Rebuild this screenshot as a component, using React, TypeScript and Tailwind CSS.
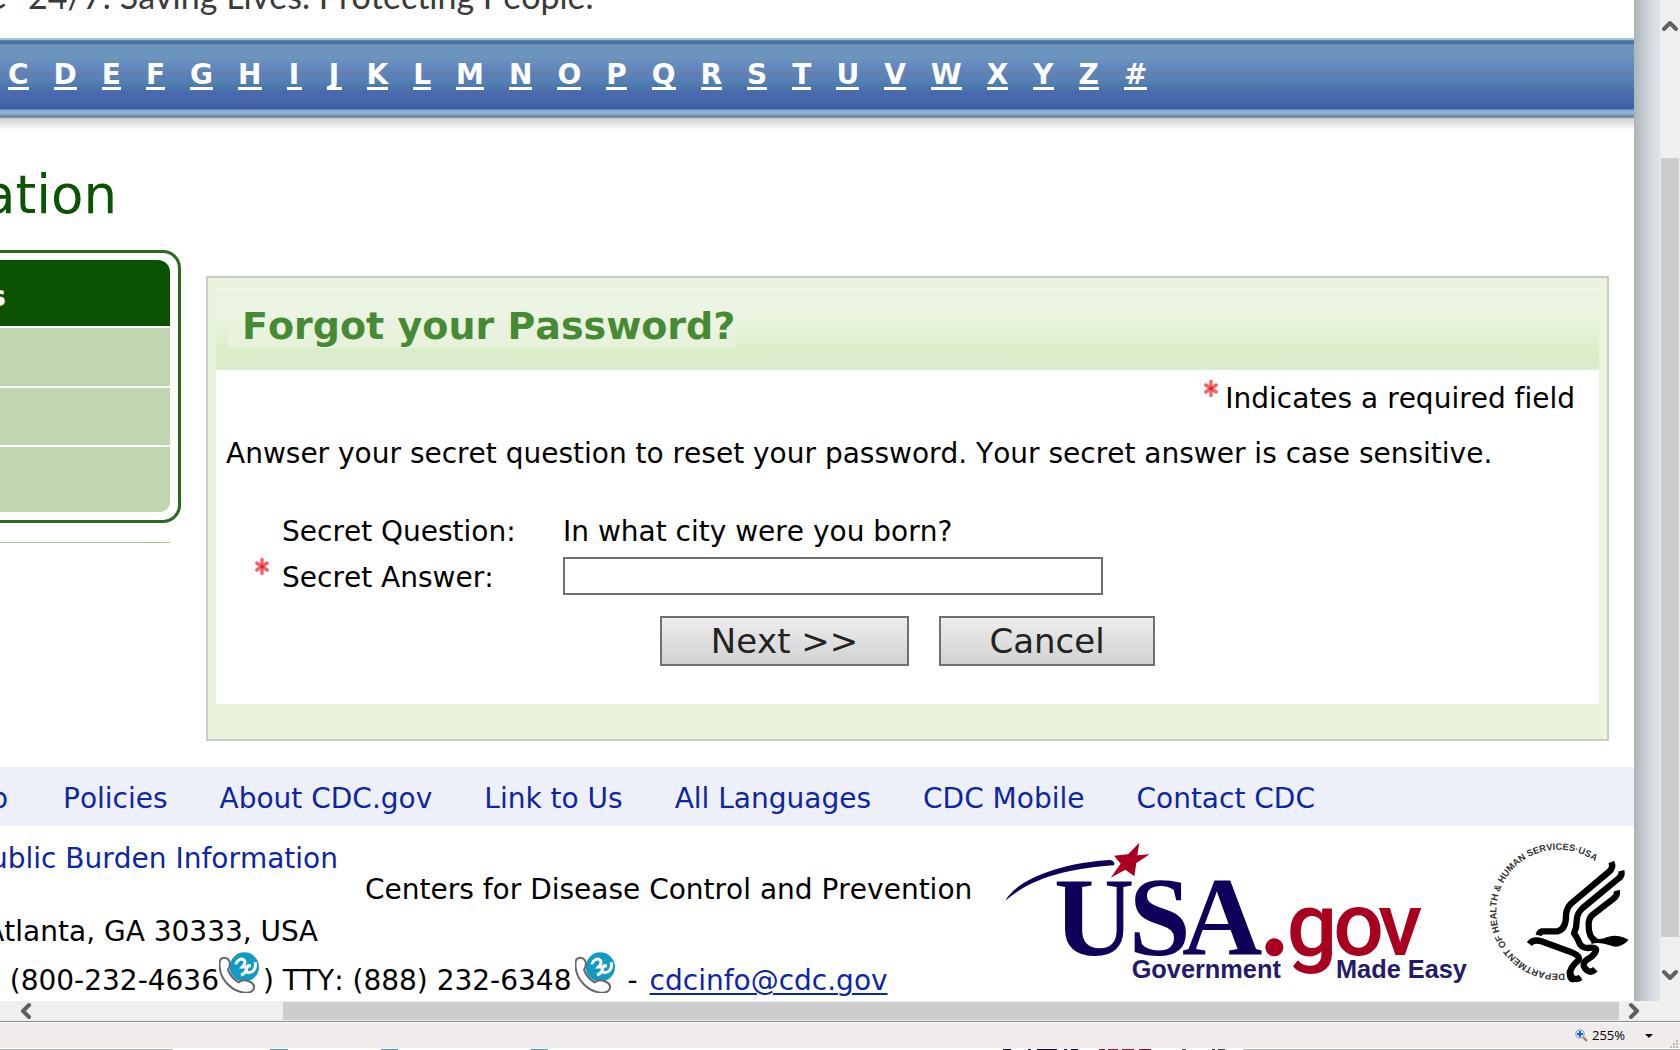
import { ChevronDown, ChevronLeft, ChevronRight, ChevronUp } from 'lucide-react'

const LETTERS = 'CDEFGHIJKLMNOPQRSTUVWXYZ#'.split('')
const FOOTER_LINKS = ['Policies', 'About CDC.gov', 'Link to Us', 'All Languages', 'CDC Mobile', 'Contact CDC']

const Required = () => (
  <svg className="w-4 h-5 shrink-0" viewBox="0 0 16 20" role="img" aria-label="Required">
    <g stroke="#f4484c" strokeWidth="3.4" strokeLinecap="round" opacity="0.85">
      <path d="M8 2.5v14M2.8 6l10.4 7M13.2 6l-10.4 7" />
    </g>
    <circle cx="8" cy="9.5" r="2" fill="#e8222a" />
  </svg>
)

const CallIcon = () => (
  <svg className="w-10 h-[41px] shrink-0" viewBox="660 575 120 123" aria-hidden="true">
    <circle cx="736" cy="620" r="44" fill="#119bc4" />
    <path
      d="M663 600c6-10 20-10 27 0 5 10 2 20-3 28 6 18 18 30 32 38 8-7 18-8 28-4 12 4 20 12 18 22-3 10-14 14-28 13-40-4-72-40-75-76-1-8-1-14 1-21z"
      fill="#fff" stroke="#666" strokeWidth="6"
    />
    <path d="M710 612c4-14 18-20 26-12 6 8 0 14-6 20h14M726 644c6-2 12-6 14-12M744 616h12M768 606c6 18-8 34-22 30-8-4-4-14 4-20" fill="none" stroke="#fff" strokeWidth="9" />
  </svg>
)

const UsaGovLogo = () => (
  <svg className="w-[468px] h-[142px] shrink-0" viewBox="66 36 1404 426" role="img" aria-label="USA.gov Government Made Easy">
    <path d="M76 212C110 150 240 98 390 90q16 2 12 16C270 116 160 140 76 212z" fill="#100059" />
    <path d="M478 38l-6 38 37-3-40 26-6 40-27-20-44 24 30-42-20-24 42-4z" fill="#a9001f" />
    <g fill="#100059" fontFamily="Liberation Serif" fontWeight="700" fontSize="334">
      <text x="222" y="376">U</text>
      <text x="446" y="376">S</text>
      <text x="606" y="376">A</text>
    </g>
    <circle cx="883" cy="352" r="27" fill="#a9001f" />
    <text x="920 1060 1194" y="375" fill="#a9001f" fontFamily="Roboto" fontWeight="500" fontSize="268">gov</text>
    <g fill="#241a6b" fontFamily="Liberation Sans" fontWeight="700" fontSize="76">
      <text x="455" y="443">Government</text>
      <text x="1068" y="443">Made Easy</text>
    </g>
  </svg>
)

const HhsLogo = () => (
  <svg className="w-[142px] h-[142px] shrink-0" viewBox="57 36 426 426" role="img" aria-label="Department of Health and Human Services USA">
    <path id="seal" d="M284 430A186 186 0 1 1 266 59A186 186 0 0 1 430 158" fill="none" />
    <text fill="#333" fontFamily="Liberation Sans" fontWeight="700" fontSize="28">
      <textPath href="#seal">DEPARTMENT OF HEALTH &amp; HUMAN SERVICES·USA</textPath>
    </text>
    <g fill="none" stroke="#000" strokeWidth="19" strokeLinejoin="round">
      <path d="M424 96q8 18-8 30L304 220q-16 16-16 38 0 40-26 46h-46q-8 2-10 12" />
      <path d="M454 122q4 16-12 26L338 234q-18 16-18 40 0 20-8 36 8 10 14 24 6 20 28 20 26-4 24 8-6 16-26 26-22 16 0 34 12 8 24-4" />
      <path d="M440 182q4 14-10 24l-62 48q-14 12-12 34 0 34 20 44" />
      <path d="M178 342q12-16 36-8l82 30q40 14 28 28-34 30-18 50 12 10 26 0" />
    </g>
    <path d="M364 318q20 16 46 4 30-12 66 8-26 26-50 18-40-14-62-6z" fill="#000" />
    <path d="M290 424q6-14 14-10l10 30 22-2q-24 22-38 12-10-12-8-30z" fill="#000" />
  </svg>
)

const IndexBar = () => (
  <nav aria-label="A-Z index">
    <div className="h-20 flex items-center pl-2 pb-3 gap-[25px] text-[28px] font-bold text-white bg-[linear-gradient(#b5cde2_0px,#a0bdd9_2px,#5c88b8_2px,#3f6797_5px,#5d86b0_6px,#6b95bd_7px,#6b95bd_20px,#6a8cc0_24px,#6089c0_29px,#6580b2_35px,#5682b8_41px,#4d7aaa_48px,#4a68ae_55px,#4a69ae_61px,#3f5fa4_68px,#3a64a4_71px,#86a8cc_72px,#96b1d6_75px,#7e9ec4_77px,#5f7fa3_78px,#8f989f_80px)]">
      {LETTERS.map(l => (
        <a key={l} href="#index" className="min-w-[15px] text-center mt-1 h-[31px] leading-[31px] border-b-[3px] border-white">{l}</a>
      ))}
    </div>
    <div className="h-3 bg-linear-to-b from-[#cecece] to-white" />
  </nav>
)

const SideMenu = () => (
  <aside className="w-[181px] shrink-0">
    <div className="h-[273px] border-[3px] border-l-0 border-[#2b6a20] rounded-r-[18px] pt-[7px] pr-2 pb-2">
      <div className="h-[66px] rounded-tr-[12px] bg-[#0a5202] text-white font-bold text-[28px] leading-[74px] overflow-hidden">
        <div className="w-[6px] flex justify-end">s</div>
      </div>
      <div className="mt-0.5 h-[58px] bg-[#c1d5b0]" />
      <div className="mt-0.5 h-[57px] bg-[#c1d5b0]" />
      <div className="mt-0.5 h-[65px] bg-[#c1d5b0] rounded-br-[10px]" />
    </div>
    <div className="mt-[19px] mr-[11px] h-px bg-[#a9c49b]" />
  </aside>
)

const PasswordPanel = () => (
  <section className="flex-1 mt-[26px] mx-[25px] border-2 border-[#c8ccc8] bg-[#eaf4dc] px-2 pb-[35px]">
    <div className="h-[92px] flex items-center pt-1 pl-3 bg-[linear-gradient(#eaf4dc_0px,#eaf4dc_8px,#eef6e6_11px,#e9f3df_18px,#edf5e4_26px,#e8f3dc_45px,#deeecb_68px,#d9ebc8_77px,#dcedcd_80px)]">
      <h2 className="pl-3.5 text-[38px] leading-[44px] font-bold text-[#478a35] bg-linear-to-b from-[#edf5e4] to-[#e6f1da]">Forgot your Password?</h2>
    </div>
    <form className="bg-white h-[334px] pt-[11px]" onSubmit={e => e.preventDefault()}>
      <div className="flex justify-end gap-1.5 pr-6">
        <div className="-mt-0.5"><Required /></div>
        <span className="leading-9">Indicates a required field</span>
      </div>
      <p className="mt-[19px] pl-2.5 leading-9">Anwser your secret question to reset your password. Your secret answer is case sensitive.</p>
      <div className="mt-[42px] pl-[38px] grid grid-cols-[28px_281px_1fr] leading-9">
        <span />
        <span>Secret Question:</span>
        <span>In what city were you born?</span>
        <div className="pt-[7px]"><Required /></div>
        <label htmlFor="answer" className="pt-2.5">Secret Answer:</label>
        <input id="answer" type="text" className="mt-[7px] w-[540px] h-[38px] border-2 border-[#707070] bg-white px-2" />
      </div>
      <div className="mt-5 pl-[444px] flex gap-[30px]">
        <button type="submit" className="w-[249px] h-[50px] border-2 border-[#707070] bg-linear-to-b from-[#ededed] to-[#d2d2d2] text-[34px] leading-10 text-[#222]">Next &gt;&gt;</button>
        <button type="button" className="w-[216px] h-[50px] border-2 border-[#707070] bg-linear-to-b from-[#ededed] to-[#d2d2d2] text-[34px] leading-10 text-[#222]">Cancel</button>
      </div>
    </form>
  </section>
)

const Footer = () => (
  <footer>
    <nav aria-label="Footer" className="mt-[26px] h-[59px] pt-1 bg-[#edf0f8] flex items-center gap-[52px] text-[#0d26a3]">
      <a href="#help" className="w-2 mr-[3px] flex justify-end">p</a>
      {FOOTER_LINKS.map(l => <a key={l} href="#footer">{l}</a>)}
    </nav>
    <div className="flex justify-between">
      <div className="leading-9">
        <div className="flex mt-[15px]">
          <a href="#burden" className="w-[338px] flex justify-end text-[#0d26a3]">ublic Burden Information</a>
          <span className="mt-[31px] ml-[27px]">Centers for Disease Control and Prevention</span>
        </div>
        <div className="mt-1.5 w-[318px] flex justify-end">Atlanta, GA 30333, USA</div>
        <div className="mt-0.5 h-[42px] flex">
          <span className="w-[219px] mt-[11px] flex justify-end">(800-232-4636</span>
          <CallIcon />
          <span className="mt-[11px] ml-1 mr-1">) TTY: (888) 232-6348</span>
          <CallIcon />
          <span className="mt-[11px] mx-3">-</span>
          <a href="mailto:cdcinfo@cdc.gov" className="mt-[11px] text-[#0d26a3] underline decoration-2 underline-offset-[3px]">cdcinfo@cdc.gov</a>
        </div>
      </div>
      <div className="flex gap-[19px] pt-4 pr-[3px]">
        <UsaGovLogo />
        <HhsLogo />
      </div>
    </div>
  </footer>
)

const VerticalScroll = () => (
  <div className="w-5 shrink-0 bg-[#efefef] flex flex-col items-center pt-3.5 pb-3.5 text-[#606060]">
    <ChevronUp className="w-6 h-6" strokeWidth={4} />
    <div className="mt-[120px] w-[18px] flex-1 bg-[#cdcdcd]" />
    <ChevronDown className="mt-[26px] w-6 h-6" strokeWidth={4} />
  </div>
)

const HorizontalScroll = () => (
  <div className="h-5 shrink-0 bg-[#efefef] flex items-center pl-3.5 pr-[34px] text-[#606060]">
    <ChevronLeft className="w-6 h-6" strokeWidth={4} />
    <div className="ml-[245px] h-[18px] flex-1 bg-[#cdcdcd]" />
    <ChevronRight className="ml-[3px] w-6 h-6" strokeWidth={4} />
  </div>
)

const StatusBar = () => (
  <div className="shrink-0 border-t border-[#8a8a8a] font-['Open_Sans',sans-serif]">
    <div className="mt-px h-[25px] bg-[#f0eceb] flex items-center justify-end text-[13px] text-black">
      <svg className="w-[13px] h-[13px]" viewBox="0 0 13 13" aria-hidden="true">
        <path d="M8 8l4 4" stroke="#b08050" strokeWidth="2.4" />
        <circle cx="5" cy="5" r="4.2" fill="#dcebfa" stroke="#7d9cc0" />
        <path d="M5 2v6M2 5h6" stroke="#1565c8" strokeWidth="2" />
      </svg>
      <button type="button" className="ml-1 flex items-center">
        255%
        <svg className="ml-5 w-2 h-1" viewBox="0 0 8 4" aria-hidden="true"><path d="M0 0h8L4 4z" fill="#111" /></svg>
      </button>
      <svg className="ml-[17px] mr-0.5 w-2 h-2 self-end" viewBox="0 0 8 8" aria-hidden="true">
        <path d="M6 0h2v2H6zM3 3h2v2H3zM6 3h2v2H6zM0 6h2v2H0zM3 6h2v2H3zM6 6h2v2H6z" fill="#bbb" />
      </svg>
    </div>
    <svg className="block w-full h-0.5" viewBox="0 0 1680 2" preserveAspectRatio="none" aria-hidden="true">
      <path d="M0 1h173v1H0zM1243 1h437v1H1243z" fill="#b5b5b8" />
      <path d="M270 1h18v1h-18zM381 1h17v1h-17zM531 1h17v1h-17z" fill="#3c9dbb" />
      <path d="M1003 1h8v1h-8zM1028 1h3v1h-3zM1037 1h20v1h-20zM1064 1h3v1h-3zM1071 1h7v1h-7z" fill="#100059" />
      <path d="M1099 1h6v1h-6zM1108 1h10v1h-10zM1122 1h12v1h-12zM1139 1h12v1h-12z" fill="#a9001f" />
      <path d="M1182 1h4v1h-4zM1212 1h3v1h-3zM1218 1h7v1h-7z" fill="#333" />
    </svg>
  </div>
)

export default function App() {
  return (
    <div className="h-screen min-h-[700px] flex flex-col overflow-hidden bg-white text-black font-['DejaVu_Sans',sans-serif] text-[28px] [font-kerning:none] [font-variant-ligatures:none]">
      <div className="flex-1 min-h-0 flex">
        <main className="flex-1 min-w-0 overflow-hidden whitespace-nowrap">
          <div className="h-[38px] flex items-start overflow-hidden font-['Lato',sans-serif] text-[34px] leading-9 text-[#3a3a3a]">
            <div className="-mt-[22px] flex gap-[22px]">
              <span className="w-[6px] flex justify-end">C</span>
              <span>24/7: Saving Lives. Protecting People.</span>
            </div>
          </div>
          <IndexBar />
          <div className="h-[120px] pt-8">
            <h1 className="w-[117px] flex justify-end text-[53px] leading-[66px] text-[#0b5404]">ation</h1>
          </div>
          <div className="flex">
            <SideMenu />
            <PasswordPanel />
          </div>
          <Footer />
        </main>
        <div className="w-[26px] shrink-0 bg-linear-to-r from-[#adb3b7] via-[#cdd3da] to-[#dee4ea]" />
        <VerticalScroll />
      </div>
      <HorizontalScroll />
      <StatusBar />
    </div>
  )
}
